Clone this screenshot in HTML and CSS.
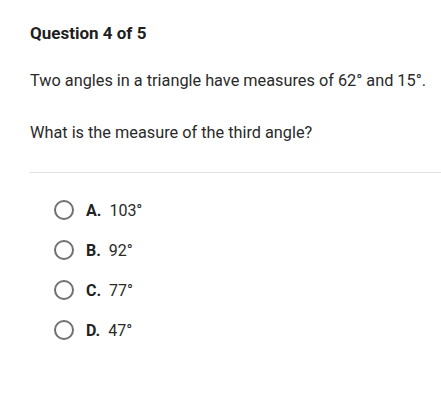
FILE: index.html
```html
<!DOCTYPE html>
<html>
<head>
<meta charset="utf-8">
<link rel="stylesheet" href="styles.css">
</head>
<body>
<div class="page">
  <div class="title">Question 4 of 5</div>
  <p class="q">Two angles in a triangle have measures of 62° and 15°.</p>
  <p class="q q2">What is the measure of the third angle?</p>
  <hr class="rule">
  <ul class="opts">
    <li class="opt"><span class="radio"></span><span class="letter">A.</span><span class="val">103°</span></li>
    <li class="opt"><span class="radio"></span><span class="letter">B.</span><span class="val">92°</span></li>
    <li class="opt"><span class="radio"></span><span class="letter">C.</span><span class="val">77°</span></li>
    <li class="opt"><span class="radio"></span><span class="letter">D.</span><span class="val">47°</span></li>
  </ul>
</div>
</body>
</html>
```
FILE: styles.css
```css
html, body {
  margin: 0;
  padding: 0;
  background: #fff;
}
body {
  font-family: Roboto, "Liberation Sans", sans-serif;
  color: #222;
}
.page {
  padding: 24px 0 0 30px;
}
.title {
  font-weight: 700;
  font-size: 17px;
  line-height: 19px;
  color: #1f1f1f;
}
.q {
  margin: 0;
  font-size: 16.3px;
  line-height: 19px;
  color: #2a2a2a;
}
.title + .q {
  margin-top: 28px;
}
.q2 {
  margin-top: 33px;
}
.rule {
  margin: 30px 0 0 0;
  border: 0;
  border-top: 1px solid #e0e0e0;
  height: 0;
}
.opts {
  list-style: none;
  margin: 27px 0 0 0;
  padding: 0 0 0 24px;
  display: flex;
  flex-direction: column;
  gap: 20px;
}
.opt {
  display: flex;
  align-items: center;
  height: 20px;
  font-size: 16px;
}
.radio {
  width: 16px;
  height: 16px;
  border: 2px solid #707070;
  border-radius: 50%;
  flex: none;
}
.letter {
  font-weight: 700;
  margin-left: 12px;
  color: #222;
}
.val {
  margin-left: 8px;
  color: #2a2a2a;
}
```
